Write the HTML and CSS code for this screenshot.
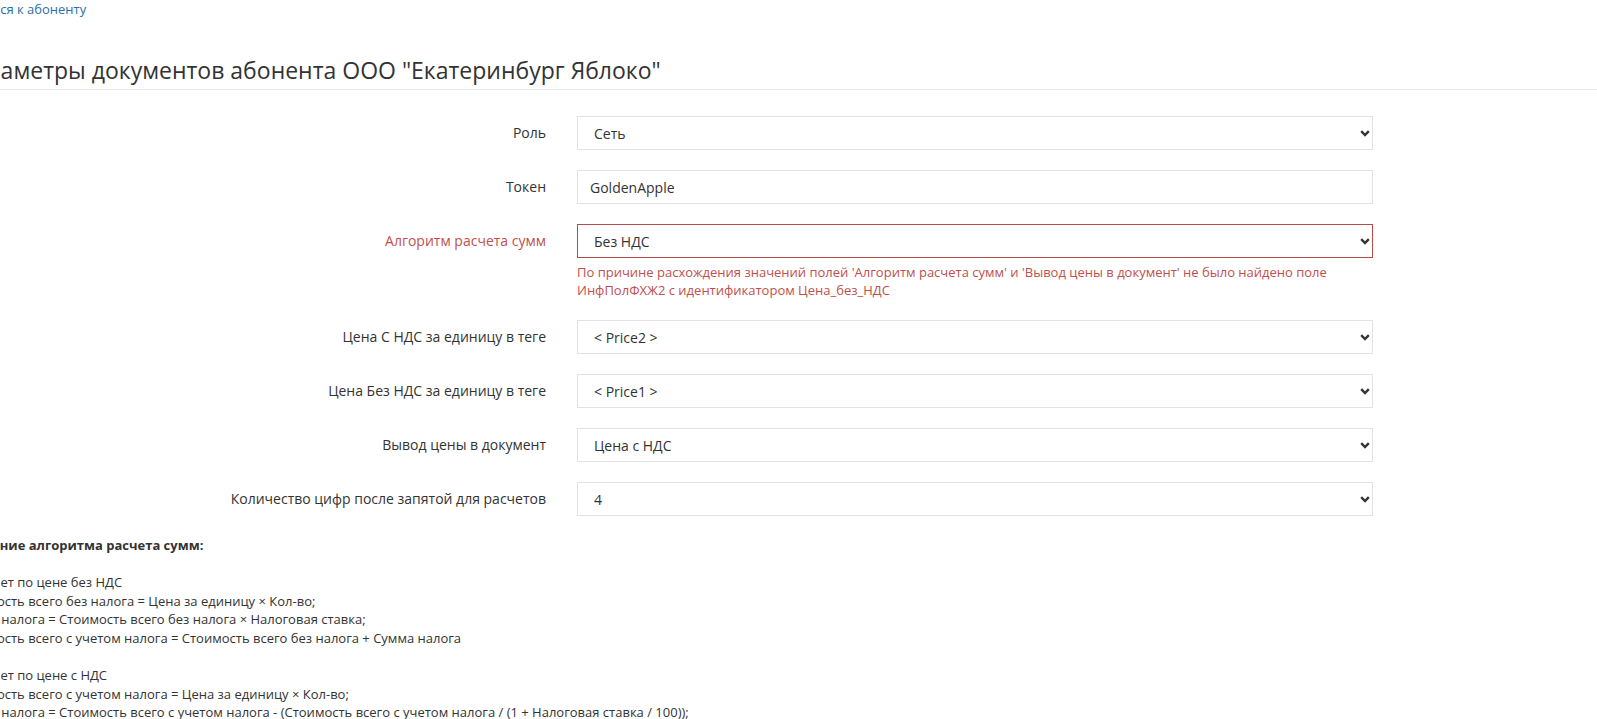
FILE: index.html
```html
<!DOCTYPE html>
<html lang="ru">
<head>
<meta charset="utf-8">
<title>Параметры документов абонента</title>
<link rel="stylesheet" href="styles.css">
</head>
<body>
<div class="page">
  <div class="content">
    <a class="back-link" href="#">Вернуться к абоненту</a>
    <div class="page-header">
      <h1 class="title">Параметры документов абонента ООО "Екатеринбург Яблоко"</h1>
    </div>
    <form class="form">
      <div class="form-row">
        <label class="form-label">Роль</label>
        <div class="control">
          <div class="select-wrap">
            <select class="field"><option>Сеть</option></select>
            <svg class="chevron" width="10" height="7" viewBox="0 0 10 7"><path d="M1.2 1.2 L5 5 L8.8 1.2" fill="none" stroke="#333" stroke-width="2.4"/></svg>
          </div>
        </div>
      </div>
      <div class="form-row">
        <label class="form-label">Токен</label>
        <div class="control">
          <input class="field" type="text" value="GoldenApple">
        </div>
      </div>
      <div class="form-row has-error">
        <label class="form-label">Алгоритм расчета сумм</label>
        <div class="control">
          <div class="select-wrap">
            <select class="field"><option>Без НДС</option></select>
            <svg class="chevron" width="10" height="7" viewBox="0 0 10 7"><path d="M1.2 1.2 L5 5 L8.8 1.2" fill="none" stroke="#333" stroke-width="2.4"/></svg>
          </div>
          <div class="help">По причине расхождения значений полей 'Алгоритм расчета сумм' и 'Вывод цены в документ' не было найдено поле ИнфПолФХЖ2 с идентификатором Цена_без_НДС</div>
        </div>
      </div>
      <div class="form-row">
        <label class="form-label">Цена С НДС за единицу в теге</label>
        <div class="control">
          <div class="select-wrap">
            <select class="field"><option>&lt; Price2 &gt;</option></select>
            <svg class="chevron" width="10" height="7" viewBox="0 0 10 7"><path d="M1.2 1.2 L5 5 L8.8 1.2" fill="none" stroke="#333" stroke-width="2.4"/></svg>
          </div>
        </div>
      </div>
      <div class="form-row">
        <label class="form-label">Цена Без НДС за единицу в теге</label>
        <div class="control">
          <div class="select-wrap">
            <select class="field"><option>&lt; Price1 &gt;</option></select>
            <svg class="chevron" width="10" height="7" viewBox="0 0 10 7"><path d="M1.2 1.2 L5 5 L8.8 1.2" fill="none" stroke="#333" stroke-width="2.4"/></svg>
          </div>
        </div>
      </div>
      <div class="form-row">
        <label class="form-label">Вывод цены в документ</label>
        <div class="control">
          <div class="select-wrap">
            <select class="field"><option>Цена с НДС</option></select>
            <svg class="chevron" width="10" height="7" viewBox="0 0 10 7"><path d="M1.2 1.2 L5 5 L8.8 1.2" fill="none" stroke="#333" stroke-width="2.4"/></svg>
          </div>
        </div>
      </div>
      <div class="form-row">
        <label class="form-label">Количество цифр после запятой для расчетов</label>
        <div class="control">
          <div class="select-wrap">
            <select class="field"><option>4</option></select>
            <svg class="chevron" width="10" height="7" viewBox="0 0 10 7"><path d="M1.2 1.2 L5 5 L8.8 1.2" fill="none" stroke="#333" stroke-width="2.4"/></svg>
          </div>
        </div>
      </div>
    </form>
    <div class="desc">
      <p class="desc-title">Описание алгоритма расчета сумм:</p>
      <p class="desc-block">1. Расчет по цене без НДС<br>Стоимость всего без налога = Цена за единицу × Кол-во;<br>Сумма налога = Стоимость всего без налога × Налоговая ставка;<br>Стоимость всего с учетом налога = Стоимость всего без налога + Сумма налога</p>
      <p class="desc-block">2. Расчет по цене с НДС<br>Стоимость всего с учетом налога = Цена за единицу × Кол-во;<br>Сумма налога = Стоимость всего с учетом налога - (Стоимость всего с учетом налога / (1 + Налоговая ставка / 100));<br>Стоимость всего без налога = Стоимость всего с учетом налога - Сумма налога</p>
    </div>
  </div>
</div>
</body>
</html>
```

FILE: styles.css
```css
html, body {
  margin: 0;
  padding: 0;
  background: #fff;
}
body {
  font-family: "Open Sans", "Noto Sans", sans-serif;
  font-size: 14px;
  color: #333;
  overflow: hidden;
}
.page {
  width: 1597px;
  height: 719px;
  overflow: hidden;
}
.content {
  margin-left: -45px;
}
.back-link {
  display: block;
  margin-left: -7px;
  font-size: 13px;
  line-height: 18px;
  color: #2a6fa8;
  text-decoration: none;
}
.page-header {
  margin-right: -100px;
  border-bottom: 1px solid #eaeaea;
  padding-top: 36px;
  padding-bottom: 2px;
}
.title {
  margin: 0 0 0 2px;
  font-size: 23px;
  font-weight: 400;
  line-height: 33px;
  color: #333;
}
.form {
  margin-top: 26px;
  display: flex;
  flex-direction: column;
  gap: 20px;
}
.form-row {
  display: grid;
  grid-template-columns: 591px 796px;
  column-gap: 31px;
  align-items: start;
}
.form-label {
  text-align: right;
  line-height: 34px;
  color: #333;
}
.control {
  display: flex;
  flex-direction: column;
}
.select-wrap {
  position: relative;
}
.field {
  box-sizing: border-box;
  width: 100%;
  height: 34px;
  margin: 0;
  border: 1px solid #e3e3e3;
  border-radius: 0;
  background: #fff;
  font-family: "Open Sans", "Noto Sans", sans-serif;
  font-size: 14px;
  color: #333;
  padding: 0 12px;
  outline: none;
}
select.field {
  -webkit-appearance: none;
  appearance: none;
  padding-left: 16px;
}
.chevron {
  position: absolute;
  right: 3px;
  top: 14px;
  pointer-events: none;
}
.has-error .form-label {
  color: #c0504d;
}
.has-error .field {
  border-color: #b94a48;
}
.help {
  margin-top: 5px;
  margin-bottom: 1px;
  font-size: 13px;
  line-height: 18px;
  color: #c0504d;
}
.desc {
  margin-top: 20px;
  margin-left: 2px;
  font-size: 13px;
  line-height: 18.57px;
}
.desc-title {
  margin: 0 0 18.57px 0;
  font-weight: 700;
}
.desc-block {
  margin: 18.57px 0 0 0;
}
```
